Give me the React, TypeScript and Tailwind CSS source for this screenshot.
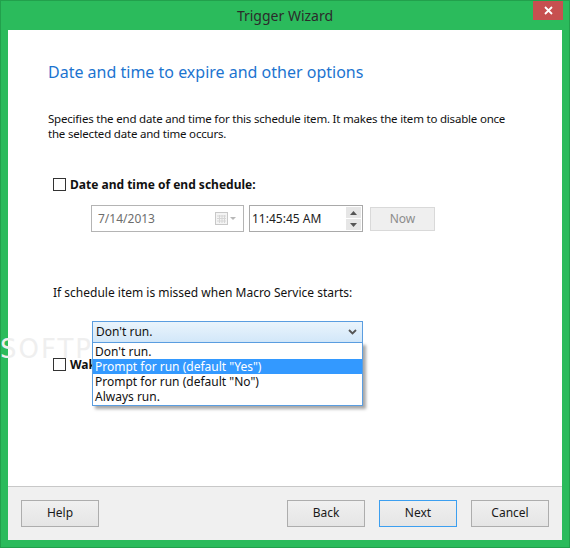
import React from "react";

const font = { fontFamily: '"Segoe UI", "Noto Sans", "Open Sans", sans-serif' };

function Check() {
  return <div className="w-[13px] h-[13px] border border-[#333333] bg-white shrink-0" />;
}

function Btn({ label, focus }: { label: string; focus?: boolean }) {
  return (
    <div
      className={
        "w-[78px] h-[27px] flex items-center justify-center text-[12px] text-[#1a1a1a] bg-gradient-to-b from-[#f0f0f0] to-[#e5e5e5] border " +
        (focus ? "border-[#3c9ff0]" : "border-[#adadad]")
      }
    >
      {label}
    </div>
  );
}

export default function App() {
  return (
    <div className="w-[570px] h-[548px] bg-[#2bbb5c] border border-[#22a04c] flex flex-col" style={font}>
      <div className="h-[29px] relative flex items-center justify-center shrink-0">
        <span className="text-[14px] text-[#2b2b2b]">Trigger Wizard</span>
        <div className="absolute right-[6px] top-0 w-[30px] h-[19px] bg-[#c75050] flex items-center justify-center">
          <svg width="9" height="9" viewBox="0 0 9 9">
            <path d="M1 1 L8 8 M8 1 L1 8" stroke="white" strokeWidth="1.8" />
          </svg>
        </div>
      </div>
      <div className="flex-1 mx-[7px] mb-[7px] flex flex-col bg-white">
        <div className="h-[456px] relative bg-white pl-[40px] pt-[32px]">
          <div className="absolute left-[-8px] top-[300px] text-[26px] tracking-[2px] text-[#efefef] select-none" style={{ fontFamily: '"DejaVu Sans", sans-serif' }}>
            SOFTPEDIA
          </div>
          <div className="relative text-[16px] leading-[20px] text-[#1c74d0]">Date and time to expire and other options</div>
          <div className="relative mt-[29px] text-[11.5px] tracking-[-0.2px] leading-[15px] text-[#111] whitespace-nowrap">
            Specifies the end date and time for this schedule item. It makes the item to disable once
            <br />
            the selected date and time occurs.
          </div>
          <div className="relative mt-[36px] ml-[5px] flex items-center gap-[4px] h-[15px]">
            <Check />
            <span className="text-[12px] font-bold text-[#111] leading-[15px]">Date and time of end schedule:</span>
          </div>
          <div className="relative mt-[13px] ml-[43px] flex items-center">
            <div className="w-[153px] h-[27px] border border-[#b4b4b4] flex items-center pl-[6px] pr-[4px] text-[12px] text-[#6d6d6d]">
              <span className="flex-1">7/14/2013</span>
              <svg width="24" height="14" viewBox="0 0 24 14">
                <rect x="0.5" y="0.5" width="12" height="12" fill="#f4f4f4" stroke="#c8c8c8" />
                <path d="M2 4 H11 M2 6.5 H11 M2 9 H11 M4.5 3 V11 M7 3 V11 M9.5 3 V11" stroke="#d6d6d6" strokeWidth="1" />
                <path d="M15 5 L21 5 L18 8 Z" fill="#b8b8b8" />
              </svg>
            </div>
            <div className="ml-[5px] w-[114px] h-[27px] border border-[#a9a9a9] flex items-center pl-[2px] pr-[1px] text-[12px] text-[#222]">
              <span className="flex-1">11:45:45 AM</span>
              <div className="flex flex-col gap-[1px]">
                <div className="w-[15px] h-[11px] bg-[#e6e6e6] flex items-center justify-center">
                  <svg width="7" height="4" viewBox="0 0 7 4"><path d="M0 4 L3.5 0 L7 4 Z" fill="#555" /></svg>
                </div>
                <div className="w-[15px] h-[11px] bg-[#e6e6e6] flex items-center justify-center">
                  <svg width="7" height="4" viewBox="0 0 7 4"><path d="M0 0 L3.5 4 L7 0 Z" fill="#555" /></svg>
                </div>
              </div>
            </div>
            <div className="ml-[7px] w-[65px] h-[24px] bg-[#efefef] border border-[#d9d9d9] flex items-center justify-center text-[12px] text-[#8c8c8c]">
              Now
            </div>
          </div>
          <div className="relative mt-[53px] ml-[5px] text-[12px] leading-[15px] text-[#111]">
            If schedule item is missed when Macro Service starts:
          </div>
          <div className="relative mt-[21px] ml-[44px] w-[271px] h-[22px] border border-[#5a9de0] bg-gradient-to-b from-[#eaf4fc] to-[#d2e7f9] flex items-center pl-[3px] pr-[5px] text-[12px] text-[#111]">
            <span className="flex-1">Don't run.</span>
            <svg width="9" height="6" viewBox="0 0 9 6"><path d="M1 1 L4.5 4.5 L8 1" stroke="#555" strokeWidth="1.8" fill="none" /></svg>
          </div>
          <div className="relative mt-[14px] ml-[5px] flex items-center gap-[4px] h-[15px]">
            <Check />
            <span className="text-[12px] font-bold text-[#111] leading-[15px]">Wake the computer to run this item</span>
          </div>
          <div className="absolute left-[84px] top-[312px] w-[271px] border border-[#5a9de0] bg-white shadow-[3px_3px_3px_rgba(0,0,0,0.35)] py-[1px] text-[12px] text-[#111] leading-[15px]">
            <div className="pl-[2px]">Don't run.</div>
            <div className="pl-[2px] bg-[#3399ff] text-white">Prompt for run (default "Yes")</div>
            <div className="pl-[2px]">Prompt for run (default "No")</div>
            <div className="pl-[2px]">Always run.</div>
          </div>
        </div>
        <div className="flex-1 border-t border-[#c8c8c8] bg-[#f0f0f0] flex items-center pl-[13px] pr-[13px] pb-[1px]">
          <Btn label="Help" />
          <div className="flex-1" />
          <Btn label="Back" />
          <div className="w-[14px]" />
          <Btn label="Next" focus />
          <div className="w-[14px]" />
          <Btn label="Cancel" />
        </div>
      </div>
    </div>
  );
}
